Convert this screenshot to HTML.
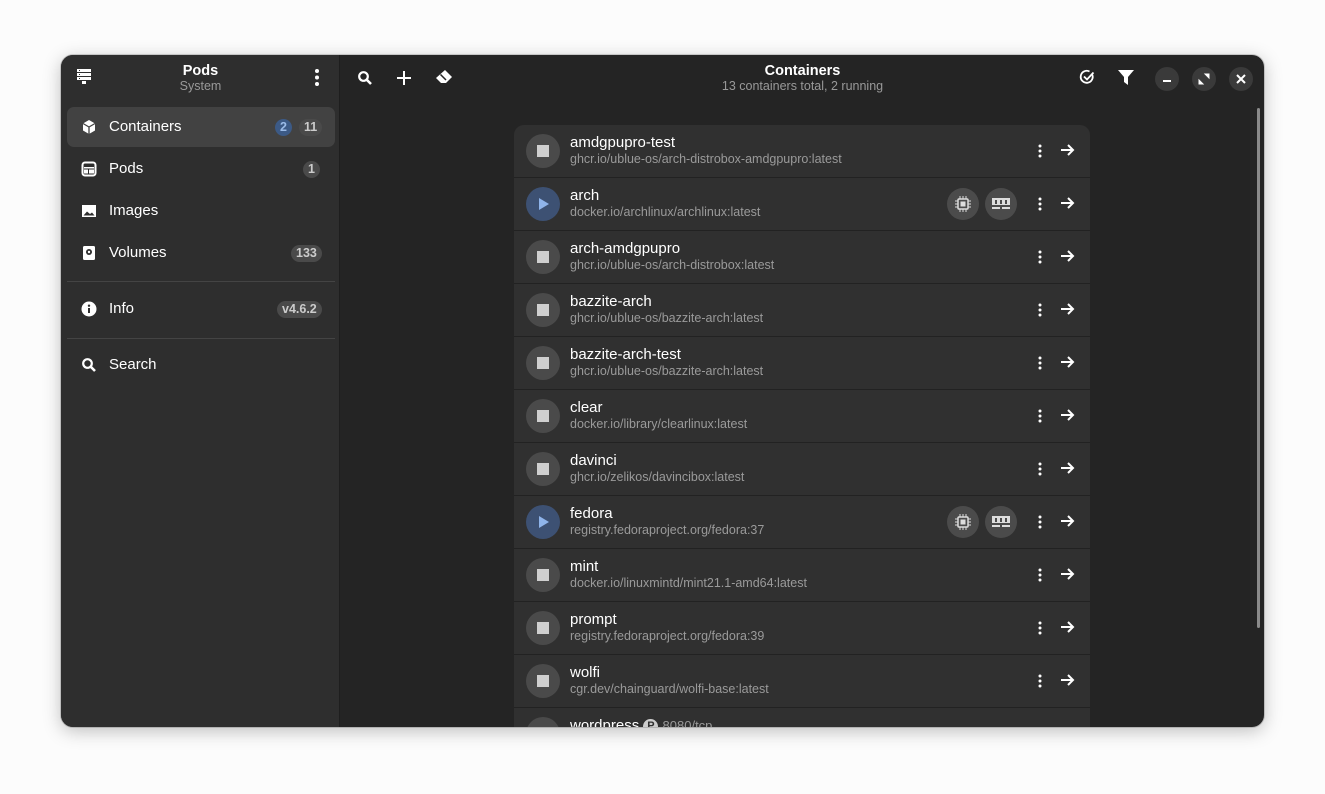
<!DOCTYPE html><html><head><style>
*{box-sizing:border-box;margin:0;padding:0}
body{width:1325px;height:794px;background:#fcfcfc;font-family:"Liberation Sans",sans-serif;position:relative;overflow:hidden}
.win{position:absolute;left:61px;top:55px;width:1203px;height:672px;border-radius:12px;overflow:hidden;background:#242424;box-shadow:0 4px 18px rgba(0,0,0,.25),0 0 0 1px rgba(0,0,0,.15)}
.side{position:absolute;left:0;top:0;width:279px;height:672px;background:#2e2e2e;border-right:1px solid #1e1e1e}
.ab{position:absolute;color:#fff}
.item{position:absolute;left:6px;width:268px;height:40px;border-radius:7px;color:#fff;font-size:15px}
.item span.t{position:absolute;left:42px;top:11px}
.item svg{position:absolute;left:14px;top:12px}
.badge{position:absolute;top:12px;height:17px;border-radius:9px;background:#4a4a4a;color:#ccc;font-size:12.5px;font-weight:bold;text-align:center;line-height:17px;padding:0 5px}
.sep{position:absolute;left:6px;width:268px;height:1px;background:#444}
.card{position:absolute;left:453px;top:70px;width:576px;height:610px;border-radius:10px 10px 0 0;background:#303030;overflow:hidden}
.row{position:absolute;left:0;width:576px;height:53px;border-bottom:1px solid #222}
.btn{position:absolute;left:12px;top:9px;width:34px;height:34px;border-radius:50%;background:#4a4a4a}
.btn i{position:absolute;left:11px;top:11px;width:12px;height:12px;background:#cfcfcf}
.btn.run{background:#3d5173}
.nm{position:absolute;left:56px;top:9px;color:#fff;font-size:15px}
.im{position:absolute;left:56px;top:27px;color:#9a9a9a;font-size:12.5px}
.dots{position:absolute;left:524px;top:19px}
.arr{position:absolute;left:546px;top:18px}
.pill{position:absolute;top:10px;width:32px;height:32px;border-radius:50%;background:#4b4b4b}
.wb{position:absolute;top:12px;width:24px;height:24px;border-radius:50%;background:#3a3a3a}
</style></head><body>
<div class="win">
<div class="side">
<svg class="ab" style="left:16px;top:14px" width="14" height="16" viewBox="0 0 14 16"><g fill="#fff"><rect x="0" y="0" width="14" height="3"/><rect x="0" y="4" width="14" height="3"/><rect x="0" y="8" width="14" height="3"/><rect x="5" y="12" width="4" height="3"/></g><g fill="#2e2e2e"><rect x="2" y="1" width="1" height="1"/><rect x="2" y="5" width="1" height="1"/><rect x="2" y="9" width="1" height="1"/></g></svg>
<div class="ab" style="left:0;width:279px;text-align:center;top:8px;font-size:14.5px;font-weight:bold">Pods</div>
<div class="ab" style="left:0;width:279px;text-align:center;top:24px;font-size:12.5px;color:#999">System</div>
<svg class="ab" style="left:254px;top:14px" width="4" height="17"><circle cx="2" cy="2" r="2" fill="#fff"/><circle cx="2" cy="8.5" r="2" fill="#fff"/><circle cx="2" cy="15" r="2" fill="#fff"/></svg>
<div class="item" style="top:52px;background:#424242"><svg width="16" height="16" viewBox="0 0 16 16"><path d="M8 1L14 4.5V11.5L8 15L2 11.5V4.5Z" fill="#fff"/><path d="M8 8L14 4.5M8 8V15M8 8L2 4.5" stroke="#424242" stroke-width="1.3" fill="none"/></svg><span class="t">Containers</span><span class="badge" style="left:208px;background:#3c5a86;color:#9bbbe8">2</span><span class="badge" style="left:232px">11</span></div>
<div class="item" style="top:94px"><svg width="16" height="16" viewBox="0 0 16 16"><rect x="1.5" y="1.5" width="13" height="13" rx="2.5" fill="none" stroke="#fff" stroke-width="2"/><rect x="3" y="6" width="10" height="1.5" fill="#fff"/><rect x="3" y="8.5" width="4" height="4" fill="#fff"/><rect x="8" y="8.5" width="5" height="4" fill="#fff"/></svg><span class="t">Pods</span><span class="badge" style="left:236px">1</span></div>
<div class="item" style="top:136px"><svg width="16" height="16" viewBox="0 0 16 16"><rect x="1" y="2" width="14" height="12" fill="#fff"/><path d="M2.5 12.5L6 8.5L9 11L11 9.5L13.5 12.5Z" fill="#2e2e2e"/></svg><span class="t">Images</span></div>
<div class="item" style="top:178px"><svg width="16" height="16" viewBox="0 0 16 16"><rect x="2" y="1" width="12" height="14" rx="1.5" fill="#fff"/><circle cx="8" cy="7" r="3" fill="#2e2e2e"/><circle cx="8" cy="7" r="1.2" fill="#fff"/></svg><span class="t">Volumes</span><span class="badge" style="left:224px">133</span></div>
<div class="sep" style="top:226px"></div>
<div class="item" style="top:234px"><svg width="16" height="16" viewBox="0 0 16 16"><circle cx="8" cy="8" r="7.5" fill="#fff"/><rect x="7" y="7" width="2" height="5" fill="#2e2e2e"/><circle cx="8" cy="4.7" r="1.2" fill="#2e2e2e"/></svg><span class="t">Info</span><span class="badge" style="left:210px">v4.6.2</span></div>
<div class="sep" style="top:283px"></div>
<div class="item" style="top:290px"><svg width="16" height="16" viewBox="0 0 16 16"><circle cx="6.5" cy="6.5" r="4.3" fill="none" stroke="#fff" stroke-width="2.2"/><path d="M9.5 9.5L14 14" stroke="#fff" stroke-width="2.6"/></svg><span class="t">Search</span></div>
</div>
<svg class="ab" style="left:296px;top:15px" width="16" height="16" viewBox="0 0 16 16"><circle cx="6.5" cy="6.5" r="4.3" fill="none" stroke="#fff" stroke-width="2.2"/><path d="M9.5 9.5L14 14" stroke="#fff" stroke-width="2.6"/></svg>
<svg class="ab" style="left:335px;top:15px" width="16" height="16"><path d="M8 1V15M1 8H15" stroke="#fff" stroke-width="2"/></svg>
<svg class="ab" style="left:374px;top:14px" width="18" height="16" viewBox="0 0 18 16"><path d="M10 1L17 8L11 14H6L1 9Z" fill="#fff"/><path d="M5.5 5.5L11 11" stroke="#242424" stroke-width="1.5"/></svg>
<div class="ab" style="left:340px;width:803px;text-align:center;top:8px;font-size:14.5px;font-weight:bold">Containers</div>
<div class="ab" style="left:340px;width:803px;text-align:center;top:24px;font-size:12.5px;color:#999">13 containers total, 2 running</div>
<svg class="ab" style="left:1018px;top:14px" width="16" height="16" viewBox="0 0 16 16"><path d="M13 5A6 6 0 1 1 10.5 2.5" fill="none" stroke="#fff" stroke-width="1.8"/><path d="M5 7.5L8 10.5L14.5 3.5" fill="none" stroke="#fff" stroke-width="1.8"/></svg>
<svg class="ab" style="left:1057px;top:14px" width="16" height="17" viewBox="0 0 16 17"><path d="M0 1H16L10 8V16L6 13V8Z" fill="#fff"/></svg>
<div class="wb" style="left:1094px"><div style="position:absolute;left:8px;top:13px;width:8px;height:2px;background:#fff"></div></div>
<div class="wb" style="left:1131px"><svg style="position:absolute;left:6px;top:6px" width="12" height="12"><path d="M7 1H11V5ZM1 7V11H5Z" fill="#fff" stroke="#fff" stroke-width="1"/></svg></div>
<div class="wb" style="left:1168px"><svg style="position:absolute;left:7px;top:7px" width="10" height="10"><path d="M1 1L9 9M9 1L1 9" stroke="#fff" stroke-width="2"/></svg></div>
<div style="position:absolute;left:1196px;top:53px;width:3px;height:520px;border-radius:2px;background:#8a8a8a"></div>
<div class="card">
<div class="row" style="top:0"><div class="btn"><i></i></div><div class="nm">amdgpupro-test</div><div class="im">ghcr.io/ublue-os/arch-distrobox-amdgpupro:latest</div></div>
<div class="row" style="top:53px"><div class="btn run"><svg style="position:absolute;left:12px;top:10px" width="12" height="14"><path d="M1 1L11 7L1 13Z" fill="#8fb4ea"/></svg></div><div class="nm">arch</div><div class="im">docker.io/archlinux/archlinux:latest</div><div class="pill" style="left:433px"></div><div class="pill" style="left:471px"></div></div>
<div class="row" style="top:106px"><div class="btn"><i></i></div><div class="nm">arch-amdgpupro</div><div class="im">ghcr.io/ublue-os/arch-distrobox:latest</div></div>
<div class="row" style="top:159px"><div class="btn"><i></i></div><div class="nm">bazzite-arch</div><div class="im">ghcr.io/ublue-os/bazzite-arch:latest</div></div>
<div class="row" style="top:212px"><div class="btn"><i></i></div><div class="nm">bazzite-arch-test</div><div class="im">ghcr.io/ublue-os/bazzite-arch:latest</div></div>
<div class="row" style="top:265px"><div class="btn"><i></i></div><div class="nm">clear</div><div class="im">docker.io/library/clearlinux:latest</div></div>
<div class="row" style="top:318px"><div class="btn"><i></i></div><div class="nm">davinci</div><div class="im">ghcr.io/zelikos/davincibox:latest</div></div>
<div class="row" style="top:371px"><div class="btn run"><svg style="position:absolute;left:12px;top:10px" width="12" height="14"><path d="M1 1L11 7L1 13Z" fill="#8fb4ea"/></svg></div><div class="nm">fedora</div><div class="im">registry.fedoraproject.org/fedora:37</div><div class="pill" style="left:433px"></div><div class="pill" style="left:471px"></div></div>
<div class="row" style="top:424px"><div class="btn"><i></i></div><div class="nm">mint</div><div class="im">docker.io/linuxmintd/mint21.1-amd64:latest</div></div>
<div class="row" style="top:477px"><div class="btn"><i></i></div><div class="nm">prompt</div><div class="im">registry.fedoraproject.org/fedora:39</div></div>
<div class="row" style="top:530px"><div class="btn"><i></i></div><div class="nm">wolfi</div><div class="im">cgr.dev/chainguard/wolfi-base:latest</div></div>
<div class="row" style="top:583px"><div class="btn"></div><div class="nm">wordpress <span style="display:inline-block;width:15px;height:15px;border-radius:50%;background:#ccc;color:#303030;font-size:11px;font-weight:bold;text-align:center;line-height:15px;vertical-align:1px">P</span> <span style="color:#9a9a9a;font-size:13px">8080/tcp</span></div></div>
</div>
</div>
<script>
document.querySelectorAll('.row').forEach(r=>{if(r.style.top==='583px')return;
r.insertAdjacentHTML('beforeend','<svg class="dots" width="4" height="14"><circle cx="2" cy="2" r="1.5" fill="#fff"/><circle cx="2" cy="7" r="1.5" fill="#fff"/><circle cx="2" cy="12" r="1.5" fill="#fff"/></svg><svg class="arr" width="15" height="14" viewBox="0 0 15 14"><path d="M1 7H13M8 2L13 7L8 12" fill="none" stroke="#fff" stroke-width="2"/></svg>');});
document.querySelectorAll('.pill').forEach((p,i)=>{p.innerHTML=i%2==0?'<svg style="position:absolute;left:8px;top:8px" width="16" height="16" viewBox="0 0 16 16"><rect x="3" y="3" width="10" height="10" rx="1" fill="none" stroke="#ddd" stroke-width="1.5"/><rect x="5.5" y="5.5" width="5" height="5" fill="#ddd"/><path d="M5 0V3M8 0V3M11 0V3M5 13V16M8 13V16M11 13V16M0 5H3M0 8H3M0 11H3M13 5H16M13 8H16M13 11H16" stroke="#ddd"/></svg>':'<svg style="position:absolute;left:7px;top:9px" width="18" height="14" viewBox="0 0 18 14"><rect x="0" y="1" width="18" height="7" fill="#ddd"/><rect x="3" y="3" width="2" height="4" fill="#4b4b4b"/><rect x="8" y="3" width="2" height="4" fill="#4b4b4b"/><rect x="13" y="3" width="2" height="4" fill="#4b4b4b"/><rect x="0" y="10" width="8" height="2" fill="#ddd"/><rect x="10" y="10" width="8" height="2" fill="#ddd"/></svg>'});
</script>
</body></html>
